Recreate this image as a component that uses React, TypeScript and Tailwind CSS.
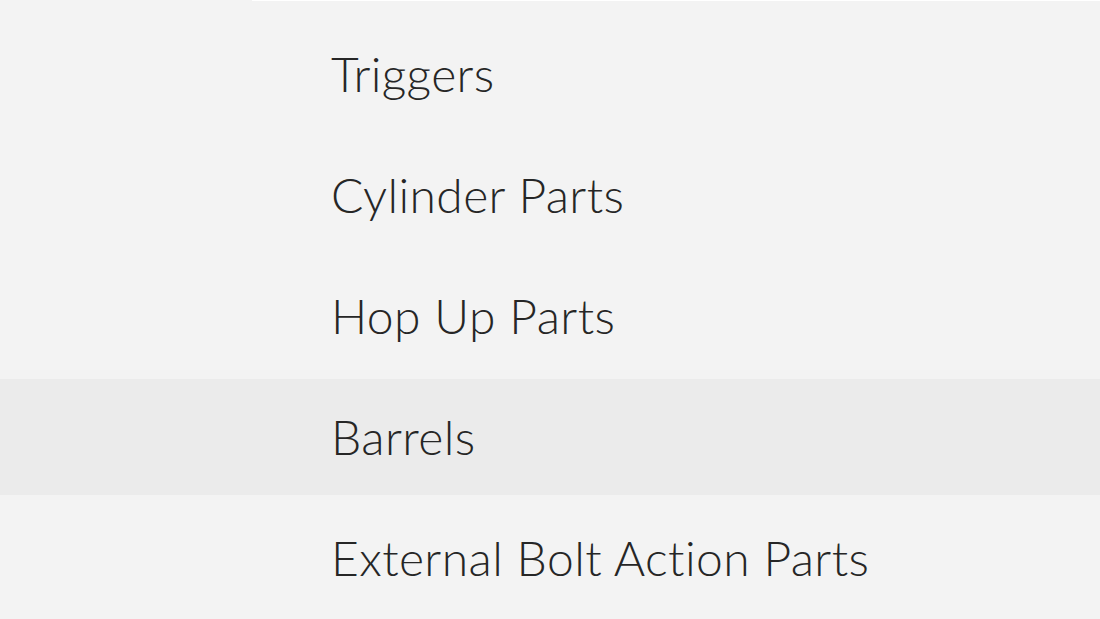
const items = [
  { label: 'Triggers' },
  { label: 'Cylinder Parts' },
  { label: 'Hop Up Parts' },
  { label: 'Barrels', active: true },
  { label: 'External Bolt Action Parts' },
];

export default function App() {
  return (
    <div className="relative h-[619px] w-[1100px] overflow-hidden bg-[#f3f3f3]">
      {/* thin top edge of the panel */}
      <div className="absolute left-[252px] right-0 top-0 h-px bg-white" />
      <ul className="flex flex-col gap-[5px] pt-[16px]">
        {items.map((item) => (
          <li
            key={item.label}
            className={`flex h-[116px] items-center pl-[331px] ${item.active ? 'bg-[#ebebeb]' : ''}`}
          >
            <span
              className="text-[48px] font-light leading-none tracking-[0.4px] text-[#262626] [font-variant-ligatures:none]"
              style={{ fontFamily: 'Lato, "Liberation Sans", sans-serif' }}
            >
              {item.label}
            </span>
          </li>
        ))}
      </ul>
    </div>
  );
}
